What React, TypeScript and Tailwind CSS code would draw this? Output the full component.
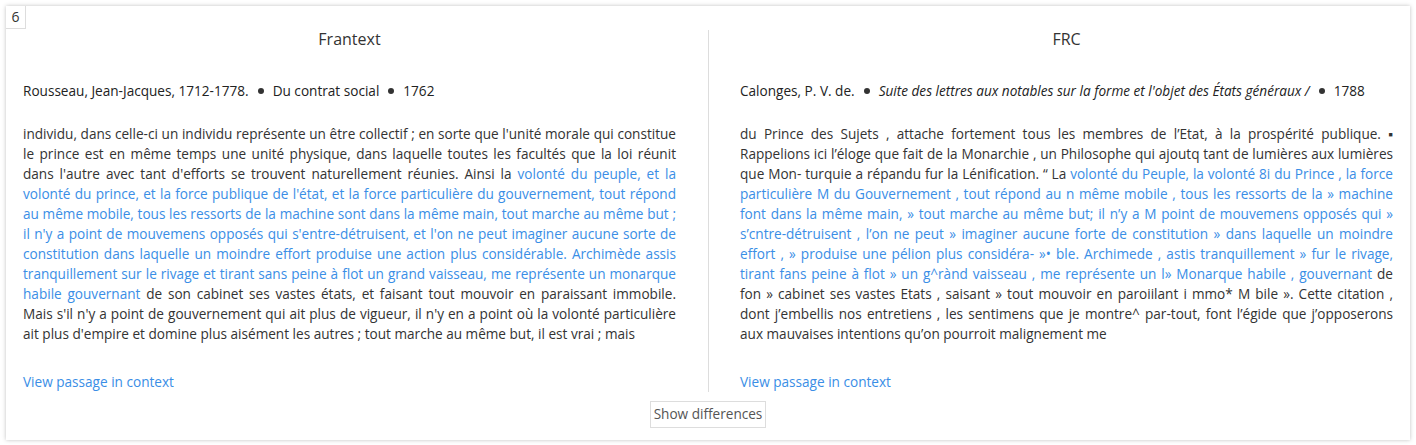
import React from "react";

const Dot = () => (
  <span className="inline-block w-[6px] h-[6px] rounded-full bg-[#333] mx-[9px] align-middle relative -top-[1px]" />
);

function Column({
  title,
  meta,
  before,
  match,
  after,
  className,
}: {
  title: string;
  meta: React.ReactNode;
  before: string;
  match: string;
  after: string;
  className: string;
}) {
  return (
    <div className={"flex-1 flex flex-col " + className}>
      <h2 className="text-center text-[16px] leading-[18px] text-[#333]">{title}</h2>
      <p className="mt-[33px] text-[13.6px] leading-[20px] text-[#222]">{meta}</p>
      <p className="mt-[23px] text-[13.6px] leading-[20px] text-[#333] text-justify">
        {before}
        <span className="text-[#3a8ee6]">{match}</span>
        {after}
      </p>
      <a className="mt-auto text-[13.6px] leading-[20px] text-[#3a8ee6]">View passage in context</a>
    </div>
  );
}

export default function App() {
  return (
    <div className="w-[1416px] h-[445px] bg-white p-[6px] font-['Open_Sans',sans-serif]">
      <div className="relative h-[434px] bg-white shadow-[0_0_4px_rgba(0,0,0,0.25)] flex flex-col">
        <div className="absolute top-0 left-0 w-[20px] h-[23px] border-r border-b border-[#ddd] text-[14px] leading-[22px] text-center text-[#333]">
          6
        </div>
        <div className="flex mt-[24px] h-[362px]">
          <Column
            className="pl-[17px] pr-[32px] border-r border-[#ddd]"
            title="Frantext"
            meta={
              <>
                Rousseau, Jean-Jacques, 1712-1778.
                <Dot />
                Du contrat social
                <Dot />
                1762
              </>
            }
            before="individu, dans celle-ci un individu représente un être collectif ; en sorte que l'unité morale qui constitue le prince est en même temps une unité physique, dans laquelle toutes les facultés que la loi réunit dans l'autre avec tant d'efforts se trouvent naturellement réunies. Ainsi la "
            match="volonté du peuple, et la volonté du prince, et la force publique de l'état, et la force particulière du gouvernement, tout répond au même mobile, tous les ressorts de la machine sont dans la même main, tout marche au même but ; il n'y a point de mouvemens opposés qui s'entre-détruisent, et l'on ne peut imaginer aucune sorte de constitution dans laquelle un moindre effort produise une action plus considérable. Archimède assis tranquillement sur le rivage et tirant sans peine à flot un grand vaisseau, me représente un monarque habile gouvernant"
            after=" de son cabinet ses vastes états, et faisant tout mouvoir en paraissant immobile. Mais s'il n'y a point de gouvernement qui ait plus de vigueur, il n'y en a point où la volonté particulière ait plus d'empire et domine plus aisément les autres ; tout marche au même but, il est vrai ; mais"
          />
          <Column
            className="pl-[31px] pr-[17px]"
            title="FRC"
            meta={
              <>
                Calonges, P. V. de.
                <Dot />
                <i>Suite des lettres aux notables sur la forme et l'objet des États généraux /</i>
                <Dot />
                1788
              </>
            }
            before="du Prince des Sujets , attache fortement tous les membres de l’Etat, à la prospérité publique. ▪ Rappelions ici l’éloge que fait de la Monarchie , un Philosophe qui ajoutq tant de lumières aux lumières que Mon- turquie a répandu fur la Lénification. “ La "
            match="volonté du Peuple, la volonté 8i du Prince , la force particulière M du Gouvernement , tout répond au n même mobile , tous les ressorts de la » machine font dans la même main, » tout marche au même but; il n’y a M point de mouvemens opposés qui » s’cntre-détruisent , l’on ne peut » imaginer aucune forte de constitution » dans laquelle un moindre effort , » produise une pélion plus considéra- »• ble. Archimede , astis tranquillement » fur le rivage, tirant fans peine à flot » un g^rànd vaisseau , me représente un l» Monarque habile , gouvernant"
            after=" de fon » cabinet ses vastes Etats , saisant » tout mouvoir en paroiilant i mmo* M bile ». Cette citation , dont j’embellis nos entretiens , les sentimens que je montre^ par-tout, font l’égide que j’opposerons aux mauvaises intentions qu’on pourroit malignement me"
          />
        </div>
        <div className="flex justify-center mt-[9px]">
          <button className="h-[27px] px-[3px] border border-[#ddd] text-[13.6px] text-[#555] bg-white">
            Show differences
          </button>
        </div>
      </div>
    </div>
  );
}
